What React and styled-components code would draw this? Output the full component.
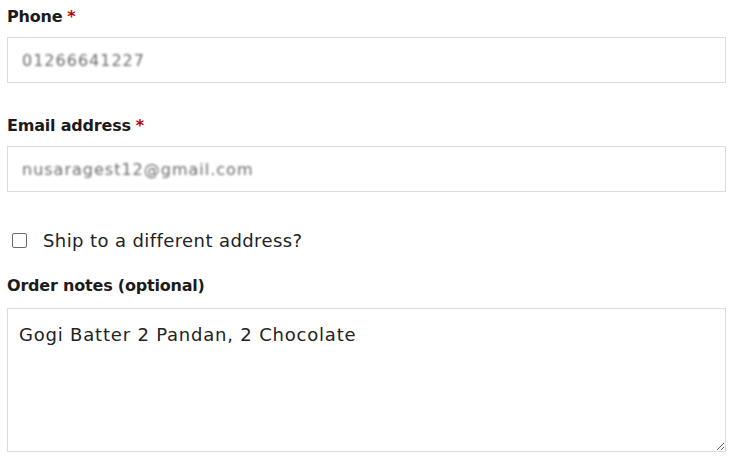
import styled, { createGlobalStyle } from "styled-components";

const GlobalStyle = createGlobalStyle`
  body {
    margin: 0;
    background: #fff;
    font-family: "DejaVu Sans", "Open Sans", sans-serif;
    color: #222;
    overflow: hidden;
  }
`;

const Form = styled.form`
  display: flex;
  flex-direction: column;
  padding: 5px 5px 0 7px;
`;

const Field = styled.div`
  display: flex;
  flex-direction: column;
  margin-bottom: ${(p) => p.$gap ?? 30}px;
`;

const Label = styled.label`
  font-size: 16px;
  font-weight: 700;
  line-height: 24px;
  color: #1b1b1b;
  margin-bottom: ${(p) => p.$space ?? 8}px;
  letter-spacing: -0.2px;
`;

const Required = styled.span`
  color: #c00000;
  margin-left: 5px;
`;

const InputBox = styled.div`
  border: 1px solid #dcdcdc;
  height: 46px;
  box-sizing: border-box;
  display: flex;
  align-items: center;
`;

const Blurred = styled.span`
  padding-left: 14px;
  font-size: 16px;
  color: #6a6a6a;
  filter: blur(0.8px);
  letter-spacing: 1px;
`;

const CheckRow = styled.label`
  display: flex;
  align-items: center;
  gap: 16px;
  padding-left: 5px;
  height: 24px;
  margin-bottom: 22px;
  font-size: 18px;
  letter-spacing: 0.4px;
  color: #222;
`;

const Box = styled.span`
  width: 13px;
  height: 13px;
  border: 1px solid #6a6a6a;
  border-radius: 2px;
`;

const TextArea = styled.textarea`
  box-sizing: border-box;
  height: 144px;
  border: 1px solid #dcdcdc;
  border-radius: 0;
  padding: 13px 11px;
  font-family: "DejaVu Sans", "Open Sans", sans-serif;
  font-size: 18px;
  line-height: 26px;
  letter-spacing: 0.8px;
  color: #222;
  resize: vertical;
  outline: none;
`;

export default function App() {
  return (
    <>
      <GlobalStyle />
      <Form>
        <Field $gap={31}>
          <Label>
            Phone<Required>*</Required>
          </Label>
          <InputBox>
            <Blurred>01266641227</Blurred>
          </InputBox>
        </Field>
        <Field $gap={36}>
          <Label>
            Email address<Required>*</Required>
          </Label>
          <InputBox>
            <Blurred>nusaragest12@gmail.com</Blurred>
          </InputBox>
        </Field>
        <CheckRow>
          <Box />
          Ship to a different address?
        </CheckRow>
        <Field $gap={0}>
          <Label $space={10}>Order notes (optional)</Label>
          <TextArea defaultValue="Gogi Batter 2 Pandan, 2 Chocolate" />
        </Field>
      </Form>
    </>
  );
}
